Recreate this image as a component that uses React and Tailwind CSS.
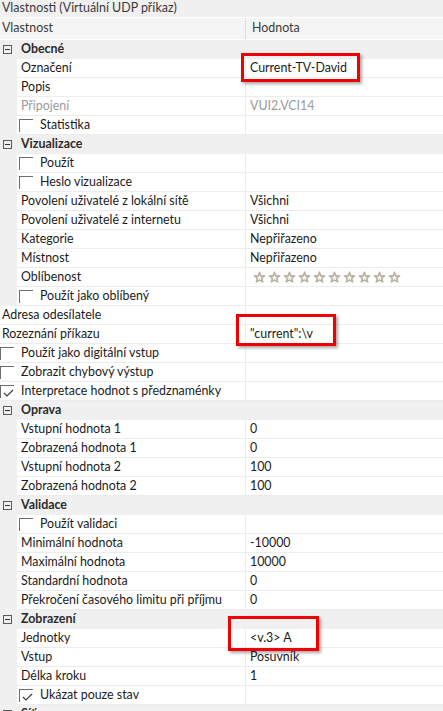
import React from 'react';

const font = { fontFamily: '"Segoe UI", Lato, "Liberation Sans", sans-serif' };

const rows = [
    { cat: 'Obecné' },
    { label: 'Označení', value: 'Current-TV-David', indent: true },
    { label: 'Popis', value: '', indent: true },
    { label: 'Připojení', value: 'VUI2.VCI14', indent: true, disabled: true },
    { label: 'Statistika', indent: true, check: false },
    { cat: 'Vizualizace' },
    { label: 'Použít', indent: true, check: false },
    { label: 'Heslo vizualizace', indent: true, check: false },
    { label: 'Povolení uživatelé z lokální sítě', value: 'Všichni', indent: true },
    { label: 'Povolení uživatelé z internetu', value: 'Všichni', indent: true },
    { label: 'Kategorie', value: 'Nepřiřazeno', indent: true },
    { label: 'Místnost', value: 'Nepřiřazeno', indent: true },
    { label: 'Oblíbenost', stars: true, indent: true },
    { label: 'Použít jako oblíbený', indent: true, check: false },
    { label: 'Adresa odesílatele', value: '' },
    { label: 'Rozeznání příkazu', value: '"current":\\v' },
    { label: 'Použít jako digitální vstup', check: false },
    { label: 'Zobrazit chybový výstup', check: false },
    { label: 'Interpretace hodnot s předznaménky', check: true },
    { cat: 'Oprava' },
    { label: 'Vstupní hodnota 1', value: '0', indent: true },
    { label: 'Zobrazená hodnota 1', value: '0', indent: true },
    { label: 'Vstupní hodnota 2', value: '100', indent: true },
    { label: 'Zobrazená hodnota 2', value: '100', indent: true },
    { cat: 'Validace' },
    { label: 'Použít validaci', indent: true, check: false },
    { label: 'Minimální hodnota', value: '-10000', indent: true },
    { label: 'Maximální hodnota', value: '10000', indent: true },
    { label: 'Standardní hodnota', value: '0', indent: true },
    { label: 'Překročení časového limitu při příjmu', value: '0', indent: true },
    { cat: 'Zobrazení' },
    { label: 'Jednotky', value: '<v.3> A', indent: true },
    { label: 'Vstup', value: 'Posuvník', indent: true },
    { label: 'Délka kroku', value: '1', indent: true },
    { label: 'Ukázat pouze stav', indent: true, check: true },
    { cat: 'Síť' },
];

const Collapse = () => (
    <svg width="9" height="9" viewBox="0 0 9 9" className="shrink-0">
        <rect x="0.5" y="0.5" width="8" height="8" fill="none" stroke="#5a5a5a" />
        <line x1="2" y1="4.5" x2="7" y2="4.5" stroke="#333" />
    </svg>
);

const Check = ({ checked }) => (
    <span className="relative w-[14px] h-[13px] border-l border-t border-[#6d6d6d] shrink-0">
        {checked && (
            <svg width="11" height="9" viewBox="0 0 11 9" className="absolute left-[2px] top-[3px]">
                <polyline points="1,4 4,7 10,1" fill="none" stroke="#3c3c3c" strokeWidth="1.2" />
            </svg>
        )}
    </span>
);

const Star = () => (
    <svg width="13" height="12" viewBox="0 0 24 23">
        <polygon
            points="12,1 15,8.5 23,9 17,14.5 19,22 12,18 5,22 7,14.5 1,9 9,8.5"
            fill="#b8b19f"
            stroke="#9c9582"
            strokeWidth="1"
        />
        <polygon points="12,7 13.6,11 17.5,11.3 14.5,14 15.5,17.6 12,15.6 8.5,17.6 9.5,14 6.5,11.3 10.4,11" fill="#fbfaf6" />
    </svg>
);

const Row = ({ row }) => {
    if (row.cat) {
        return (
            <div className="flex items-center h-[19px] bg-[#f0f0f0] border-b border-[#f0f0f0]">
                <span className="w-[21px] pl-[3px] flex items-center">
                    <Collapse />
                </span>
                <span className="font-bold text-[#2b2b2b]">{row.cat}</span>
            </div>
        );
    }
    return (
        <div className="flex h-[19px]">
            {row.indent && <div className="w-[17px] bg-[#f0f0f0] shrink-0" />}
            <div
                className={`flex items-center border-b border-r border-[#ececec] shrink-0 overflow-hidden whitespace-nowrap ${
                    row.indent ? 'w-[229px]' : 'w-[246px]'
                } ${row.check === undefined ? (row.indent ? 'pl-[4px]' : 'pl-[2px]') : row.indent ? 'pl-[2px]' : ''}`}
            >
                {row.check !== undefined && <Check checked={row.check} />}
                <span className={`${row.check !== undefined ? 'pl-[7px]' : ''} ${row.disabled ? 'text-[#9a9a9a]' : 'text-[#1b1b1b]'}`}>
                    {row.label}
                </span>
            </div>
            <div className="flex-1 flex items-center pl-[4px] border-b border-[#ececec] whitespace-nowrap">
                {row.stars ? (
                    <span className="flex gap-[2px] pl-[3px]">
                        {Array.from({ length: 10 }).map((_, i) => (
                            <Star key={i} />
                        ))}
                    </span>
                ) : (
                    <span className={row.disabled ? 'text-[#9a9a9a]' : 'text-[#1b1b1b]'}>{row.value}</span>
                )}
            </div>
        </div>
    );
};

export default function App() {
    return (
        <div className="relative w-[443px] h-[711px] overflow-hidden bg-white text-[12.4px] leading-none" style={font}>
            <div className="h-[17px] bg-[#f0f0f0] flex items-center pl-[2px] text-[#3a3a3a]">
                Vlastnosti (Virtuální UDP příkaz)
            </div>
            <div className="flex h-[23px] bg-[#f5f5f5] border-t border-white border-b border-[#dedede] text-[#3a3a3a]">
                <div className="w-[246px] flex items-center pl-[2px] border-r border-[#dedede]">Vlastnost</div>
                <div className="flex-1 flex items-center pl-[6px]">Hodnota</div>
            </div>
            <div className="flex flex-col">
                {rows.map((row, i) => (
                    <Row key={i} row={row} />
                ))}
            </div>

            {/* annotation boxes */}
            <div className="absolute left-[241px] top-[53px] w-[119px] h-[29px] border-[3px] border-[#f00000] shadow-[2px_2px_3px_rgba(0,0,0,0.35)]" />
            <div className="absolute left-[236px] top-[314px] w-[100px] h-[32px] border-[3px] border-[#f00000] shadow-[2px_2px_3px_rgba(0,0,0,0.35)]" />
            <div className="absolute left-[228px] top-[616px] w-[91px] h-[35px] border-[3px] border-[#f00000] shadow-[2px_2px_3px_rgba(0,0,0,0.35)]" />
        </div>
    );
}
